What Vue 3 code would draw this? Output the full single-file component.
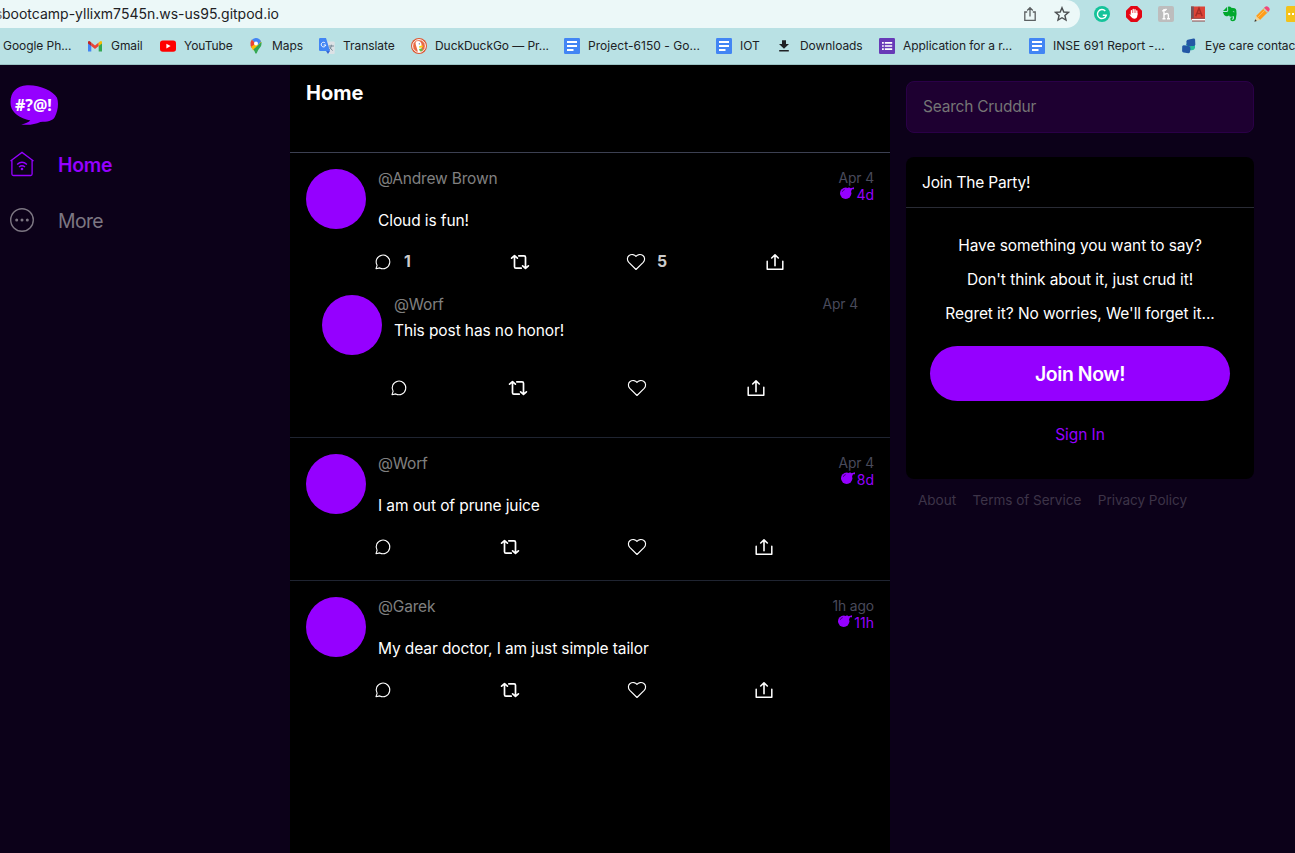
<script setup>
import { h } from 'vue'

const bookmarks = [
  { label: 'Google Ph...', icon: null },
  { label: 'Gmail', icon: 'gmail' },
  { label: 'YouTube', icon: 'youtube' },
  { label: 'Maps', icon: 'maps' },
  { label: 'Translate', icon: 'translate' },
  { label: 'DuckDuckGo — Pr...', icon: 'duck' },
  { label: 'Project-6150 - Go...', icon: 'docs' },
  { label: 'IOT', icon: 'docs' },
  { label: 'Downloads', icon: 'download' },
  { label: 'Application for a r...', icon: 'forms' },
  { label: 'INSE 691 Report -...', icon: 'docs' },
  { label: 'Eye care contac', icon: 'eye' },
]

const posts = [
  {
    handle: '@Andrew Brown', message: 'Cloud is fun!', date: 'Apr 4', expires: '4d', replies: 1, likes: 5,
    reply: { handle: '@Worf', message: 'This post has no honor!', date: 'Apr 4' },
  },
  { handle: '@Worf', message: 'I am out of prune juice', date: 'Apr 4', expires: '8d' },
  { handle: '@Garek', message: 'My dear doctor, I am just simple tailor', date: '1h ago', expires: '11h' },
]

const pitch = [
  'Have something you want to say?',
  "Don't think about it, just crud it!",
  "Regret it? No worries, We'll forget it...",
]

const stroke = (d, width) => h('path', { d, fill: 'none', stroke: 'currentColor', 'stroke-width': width, 'stroke-linejoin': 'round', 'stroke-linecap': 'round' })
const shapes = {
  comment: () => stroke('M3 16.7 L4.1 13.3 A6.8 6.8 0 1 1 6.8 15.9 Z', 1.1),
  repost: () => [
    stroke('M1.6 6.2 L4.5 3.6 L7.4 6.2 M4.5 4 V14.8 Q4.5 16.2 5.9 16.2 H11.2', 1.7),
    stroke('M8.8 3.8 H14.1 Q15.5 3.8 15.5 5.2 V15.8 M12.6 13.8 L15.5 16.4 L18.4 13.8', 1.7),
  ],
  heart: () => stroke('M10 17.5 L2.8 10.4 C0.8 8.2 1 5.1 3.1 3.5 C5.4 1.9 8.6 2.4 10 4.4 C11.4 2.4 14.6 1.9 16.9 3.5 C19 5.1 19.2 8.2 17.2 10.4 Z', 1.15),
  share: () => [
    stroke('M2.2 9.3 V17.2 H17.8 V9.3', 1.5),
    stroke('M10 13.8 V3.2 M6.7 6 L10 2.9 L13.3 6', 1.6),
  ],
}
const ActionIcon = (props) => h('svg', { viewBox: '0 0 20 20', width: 20, height: 20 }, shapes[props.name]())
ActionIcon.props = ['name']
</script>

<template>
  <div class="window">
    <div class="toolbar">
      <div class="address">
        <span class="url"><i>s</i>bootcamp-yllixm7545n.ws-us95.gitpod.io</span>
        <svg viewBox="0 0 16 16" width="16" height="16"><path d="M5.2 6H2.8v8.4h10.4V6h-2.4M8 10.5V1.8M5.2 4.5 8 1.7l2.8 2.8" fill="none" stroke="#5c6062" stroke-width="1.3" /></svg>
        <svg viewBox="0 0 16 16" width="16" height="16"><path d="m8 1.7 1.8 4.3 4.7.4-3.6 3.1 1.1 4.6L8 11.7l-4 2.4 1.1-4.6-3.6-3.1 4.7-.4z" fill="none" stroke="#4c5052" stroke-width="1.4" /></svg>
      </div>
      <div class="extensions">
        <svg viewBox="0 0 16 16" width="16" height="16"><circle cx="8" cy="8" r="8" fill="#15c39a" /><path d="M11.3 5A4.5 4.5 0 1 0 12.3 9.3H8.8M12.3 9.3 10.8 11.8" fill="none" stroke="#fff" stroke-width="1.4" /></svg>
        <svg viewBox="0 0 16 16" width="16" height="16"><path d="M4.8 0h6.4L16 4.8v6.4L11.2 16H4.8L0 11.2V4.8z" fill="#e30613" /><path d="M5.4 8V4.6M7.2 7.5V3.4M9 7.5V3.6M10.8 8.5V4.8" stroke="#fff" stroke-width="1.3" stroke-linecap="round" /><path d="M4.8 7h6.6v2.6Q11 12.8 8.3 12.8 6.5 12.8 5.200 11L3.300 8.600q.6-1 2 .3z" fill="#fff" /></svg>
        <svg viewBox="0 0 16 16" width="16" height="16"><rect width="16" height="16" rx="2" fill="#bdbdbd" /><path d="M6 3v10M6 8.8Q10.6 6 10.4 9.5V13M4.2 4.7q3 .6 4.3-1.8M4.5 12.700h3M9 12.700h3" fill="none" stroke="#fff" stroke-width="1.4" /></svg>
        <svg viewBox="0 0 16 16" width="16" height="16"><path d="M1 .5h14v14H2.500L1 13z" fill="#dc4437" /><path d="M1 .5h2.800v11.500H1z" fill="#77545b" /><path d="M2 12.500h13V15H2z" fill="#fff" /><path d="M2 15h13M1.500 12.300H15" stroke="#8b4545" /><path d="m5.700 10.300 3.300-8 3.200 8M7 7.600h4" fill="none" stroke="#a72c26" stroke-width="1.500" /></svg>
        <svg viewBox="0 0 16 16" width="16" height="16"><path d="M5.200.8 1 5h3.400q.8 0 .8-.8z" fill="#00a82d" /><path d="M6 .7q2.300-.4 3.400 1l3.300.5q1.300.3 1.600 2 .8 4.200-.4 8.400-.4 2.700-3.200 2.700-2.500 0-2.500-2.200 0-2.100 2.500-2v1.700q-1-.2-1 .4t1 .6q1.400 0 1.400-2.300l-.4-1.600Q7.600 12 7 9.200 6.300 10.800 4 10.200 1.600 9.500.9 6h3.900Q6.200 5.800 6.200 4.400z" fill="#00a82d" /><path d="M10.600 6q1.200-1.400 2 .2z" fill="#b9e1e4" /></svg>
        <svg viewBox="0 0 16 16" width="16" height="16"><path d="m2 10 8.800-8.800 4 4L6 14z" fill="#ff9d1b" /><path d="m10 2 1.600-1.600q1.400-.8 3 .9 1.600 1.600.9 3L14 5.800z" fill="#f1477e" /><path d="m9.100 2.900 4 4 1-1.100-3.900-3.900z" fill="#bdc9cb" /><path d="m2 10 4 4-5.300 1.600z" fill="#efd49b" /><path d="m1.200 13.300 1.600 1.600-2.400.8z" fill="#333" /><path d="M3.600 11.500 11.800 3.300" stroke="#ffc25b" /></svg>
        <svg viewBox="0 0 16 16" width="16" height="16"><rect width="16" height="16" rx="1.500" fill="#f3c21a" /><path d="M2.200 7h2v2h-2zM6 7h2v2H6zM10 7h2v2h-2z" fill="#fff" /></svg>
      </div>
    </div>

    <nav class="bookmarks">
      <a v-for="b in bookmarks" :key="b.label" class="bookmark">
        <svg v-if="b.icon === 'gmail'" viewBox="0 0 16 16" width="16" height="16"><path d="M1 4v9.500h3.300V7z" fill="#4285f4" /><path d="M15 4v9.500h-3.300V7z" fill="#34a853" /><path d="m4.300 4.600 3.700 3 3.700-3V8L8 11 4.300 8z" fill="#ea4335" /><path d="M1 4Q1.500 1.800 4.300 4.400V8L1 5.500z" fill="#c5221f" /><path d="M15 4q-.5-2.200-3.300.4V8L15 5.500z" fill="#fbbc04" /></svg>
        <svg v-else-if="b.icon === 'youtube'" viewBox="0 0 16 16" width="16" height="16"><rect y="2.400" width="16" height="11.400" rx="2.800" fill="#f00" /><path d="m6.400 5.800 4.200 2.300-4.200 2.300z" fill="#fff" /></svg>
        <svg v-else-if="b.icon === 'maps'" viewBox="0 0 16 16" width="16" height="16"><path d="M3.900 1.600 8 5.400 3.600 10Q1 5.300 3.900 1.600z" fill="#ea4335" /><path d="m3.100 8.800 9.300-6.500 1 2.500-8.300 7.600z" fill="#fbbc04" /><path d="M13.300 4q1 3.400-1.800 6.300Q9.600 12.300 8.800 15q-.8 1.300-1.600 0-.5-1.700-1.800-3.400z" fill="#34a853" /><path d="M8 0A5.400 5.400 0 0 1 13 3.500L10 7 4 1.700Q5.700 0 8 0" fill="#4285f4" /><circle cx="8" cy="5.500" r="2" fill="#fff" /></svg>
        <svg v-else-if="b.icon === 'translate'" viewBox="0 0 16 16" width="16" height="16"><path d="M7 3.500h7.700q1 0 1 1V15q0 1-1 1H9z" fill="#dce1e5" /><path d="M9.700 8h5.200M12.300 6.700V8q-.3 2.700-2.500 4.200M10.700 9q1 2 3 3.500" fill="none" stroke="#778995" stroke-width="1" /><path d="M1.200 0H7l4 13H1.200Q0 13 0 11.800V1.200Q0 0 1.200 0z" fill="#4285f4" /><path d="M7 13h4l-2 3z" fill="#3367d6" /><path d="M6.200 5A2.300 2.300 0 1 0 6.800 7H4.700" fill="none" stroke="#fff" stroke-width="1" /></svg>
        <svg v-else-if="b.icon === 'duck'" viewBox="0 0 16 16" width="16" height="16"><circle cx="8" cy="8" r="8" fill="#de5833" /><circle cx="8" cy="8" r="6.400" fill="#e96a44" stroke="#fff" stroke-width="1" /><path d="M5 3.400q3.900-1.500 5.300 1.800.5 1.600.3 4.600l-.2 4.200q-2 .7-3.400-.1L5.100 7.800Q4 4.500 5 3.400z" fill="#fff" /><circle cx="8.300" cy="5.800" r=".6" fill="#315388" /><path d="m8.200 8 3.800-.4-.3 1.500-3.300 1z" fill="#fdd20a" /><path d="m8 11 3.400-.8v2.700L9 13.400z" fill="#65bc46" /></svg>
        <svg v-else-if="b.icon === 'docs'" viewBox="0 0 16 16" width="16" height="16"><rect width="16" height="16" rx="1.200" fill="#4285f4" /><path d="M3 4h10M3 8h10M3 12h6.500" stroke="#fff" stroke-width="1.800" /></svg>
        <svg v-else-if="b.icon === 'download'" viewBox="0 0 16 16" width="16" height="16"><path d="M6 2.200h4V6h3L8 10.800 3 6h3zM3.200 12h9.600v1.500H3.200z" fill="#202124" /></svg>
        <svg v-else-if="b.icon === 'forms'" viewBox="0 0 16 16" width="16" height="16"><rect width="16" height="16" rx="1.200" fill="#673ab7" /><path d="M3 4.800h1.800M3 8h1.800M3 11.200h1.800M5.800 4.800h7.400M5.800 8h7.400M5.800 11.200h7.400" stroke="#fff" stroke-width="1.700" /></svg>
        <svg v-else-if="b.icon === 'eye'" viewBox="0 0 16 16" width="16" height="16"><path d="M5 6h9v4q-1 3-5 2z" fill="#25b99a" /><path d="m2.600 7.200 6.200.5q1.200.3 1.200 1.500l-1.100 5q-.4 1-1.400 1l-5-.7q-1.300-.2-1.400-1.500l.1-4.400q0-1.300 1.400-1.400z" fill="#2357a5" /><path d="m6.700 1.800 5.800-1.300q1.500-.2 1.600 1.300l.2 4.800q-.2 1.400-1.500 1.500H7.200Q5.600 8 5.400 6.600l.1-3.300q.1-1.200 1.200-1.500z" fill="#2357a5" /><path d="M5.300 6.600Q7 9 11.500 7.900L9.700 11Q9.500 7.800 5 7.200z" fill="#25b99a" /></svg>
        <span>{{ b.label }}</span>
      </a>
    </nav>

    <div class="app">
      <aside class="sidebar">
        <div class="logo">
          <svg viewBox="0 0 48 40" width="48" height="40"><path d="M17 .2C29-.5 43 5.500 47 12.700c2 5.700.8 13.800-2.200 19.300-2.300 4.200-7.600 4.800-14.400 4.900-5.400 2.200-11 3.500-19.200 2.500 4.300-.9 7.300-2.200 9.100-4C9.600 33.300 2.300 28 .8 20.700-.9 8.800 5.100 1 17 .2Z" fill="#9500ff" /></svg>
          <span>#?@!</span>
        </div>
        <a class="nav-item active">
          <svg viewBox="0 0 24 26" width="24" height="26"><path d="M.5 10 12 1.400 23.500 10M1.900 9v14q0 1.500 1.500 1.500h17.200q1.500 0 1.500-1.500V9" fill="none" stroke="currentColor" stroke-width="1.300" /><path d="M7.100 13.500q4.900-4.300 9.800 0M9 16q3-2.500 6 0" fill="none" stroke="currentColor" stroke-width="1.400" /><circle cx="12" cy="18" r="1.300" fill="currentColor" /></svg>
          <span>Home</span>
        </a>
        <a class="nav-item more">
          <svg viewBox="0 0 24 24" width="24" height="24"><circle cx="12" cy="12" r="11.300" fill="none" stroke="currentColor" stroke-width="1.400" /><g fill="currentColor"><circle cx="6.700" cy="12" r="1.500" /><circle cx="12" cy="12" r="1.500" /><circle cx="17.300" cy="12" r="1.500" /></g></svg>
          <span>More</span>
        </a>
      </aside>

      <main class="feed">
        <header class="feed-header">Home</header>
        <article v-for="post in posts" :key="post.handle" class="post" :class="{ threaded: post.reply }">
          <div class="entry">
            <div class="avatar"></div>
            <div class="body">
              <div class="handle">{{ post.handle }}</div>
              <p class="message">{{ post.message }}</p>
            </div>
            <div class="times">
              <div class="date">{{ post.date }}</div>
              <div class="expires">
                <svg viewBox="0 0 14 12" width="14" height="12"><circle cx="5.700" cy="6.300" r="5.700" fill="currentColor" /><path d="M7 1.500 9 .2 10.600 1.200 14 .3V2.200L12 2.300 10.800 5z" fill="currentColor" /><path d="M2.300 4.800Q2.900 2.900 4.700 2.600" fill="none" stroke="#2a0050" stroke-width=".8" /></svg>
                <span>{{ post.expires }}</span>
              </div>
            </div>
          </div>
          <div class="actions">
            <span class="action"><ActionIcon name="comment" /><b v-if="post.replies">{{ post.replies }}</b></span>
            <span class="action"><ActionIcon name="repost" /></span>
            <span class="action"><ActionIcon name="heart" /><b v-if="post.likes">{{ post.likes }}</b></span>
            <span class="action"><ActionIcon name="share" /></span>
          </div>
          <div v-if="post.reply" class="reply">
            <div class="entry">
              <div class="avatar"></div>
              <div class="body">
                <div class="handle">{{ post.reply.handle }}</div>
                <p class="message">{{ post.reply.message }}</p>
              </div>
              <div class="date">{{ post.reply.date }}</div>
            </div>
            <div class="actions">
              <span class="action"><ActionIcon name="comment" /></span>
              <span class="action"><ActionIcon name="repost" /></span>
              <span class="action"><ActionIcon name="heart" /></span>
              <span class="action"><ActionIcon name="share" /></span>
            </div>
          </div>
        </article>
      </main>

      <aside class="rail">
        <input class="search" type="text" placeholder="Search Cruddur" />
        <section class="card">
          <h2>Join The Party!</h2>
          <div class="card-body">
            <p v-for="line in pitch" :key="line">{{ line }}</p>
            <button>Join Now!</button>
            <a class="signin">Sign In</a>
          </div>
        </section>
        <footer class="links"><a>About</a><a>Terms of Service</a><a>Privacy Policy</a></footer>
      </aside>
    </div>
  </div>
</template>

<style>
body { margin: 0; overflow: hidden; }
</style>

<style scoped>
.window { height: 853px; display: flex; flex-direction: column; overflow: hidden; font-family: Inter, "Liberation Sans", sans-serif; }
svg { display: block; flex: none; }

.toolbar { height: 28px; flex: none; display: flex; background: #b9e1e4; }
.address { flex: none; width: 1080px; box-sizing: border-box; padding-right: 10px; display: flex; align-items: center; gap: 16px; background: #ecf8f8; border-radius: 0 14px 14px 0; color: #202124; }
.url { flex: 1; margin-left: -5px; padding-bottom: 1px; font-size: 14px; white-space: nowrap; }
.url i { display: inline-block; width: 7px; font-style: normal; color: #777; }
.extensions { flex: none; display: flex; align-items: center; gap: 16px; margin-left: 14px; }

.bookmarks { height: 37px; box-sizing: border-box; flex: none; display: grid; grid-template-columns: 84px 73px 88px 71px 92px 153px 152px 60px 103px 150px 152px 117px; padding-left: 3px; background: #b9e1e4; border-bottom: 1px solid #9bc3c5; }
.bookmark { display: flex; align-items: center; gap: 8px; font-size: 12px; letter-spacing: -.06px; color: #202124; white-space: nowrap; }
.bookmark:nth-child(7), .bookmark:nth-child(11) { letter-spacing: .05px; }
.bookmark span { padding-bottom: 1px; }

.app { flex: 1; min-height: 0; display: grid; grid-template-columns: 290px 600px 1fr; background: #0c0119; }

.sidebar { padding: 20px 0 0 10px; }
.logo { position: relative; width: 48px; height: 40px; margin-bottom: 25px; }
.logo span { position: absolute; left: 5px; top: 9px; font: bold 16px/22px "Noto Sans", sans-serif; letter-spacing: 0; color: #fff; }
.nav-item { display: flex; align-items: center; gap: 24px; height: 30px; margin-bottom: 26px; font-size: 19.4px; color: #7c7682; }
.nav-item svg { margin-bottom: 2px; }
.nav-item.active { color: #9500ff; font-weight: 600; letter-spacing: -.2px; }
.nav-item.more { letter-spacing: -.6px; }

.feed { background: #000; color: #fff; }
.feed-header { height: 88px; box-sizing: border-box; padding: 16px; border-bottom: 1px solid #3c4052; font-size: 20px; line-height: 24px; font-weight: 700; }
.post { height: 143px; box-sizing: border-box; padding: 16px 16px 0; border-bottom: 1px solid #1f2431; }
.post.threaded { height: 285px; }
.post:last-child { border-bottom: 0; }
.entry { display: flex; height: 83px; }
.avatar { flex: none; width: 60px; height: 60px; margin-right: 12px; border-radius: 50%; background: #9500ff; }
.body { flex: 1; font-size: 15.5px; line-height: 20px; letter-spacing: -.1px; }
.handle { color: #808080; letter-spacing: -.18px; }
.message { margin: 22px 0 0; }
.times { text-align: right; }
.date { font-size: 13.8px; line-height: 19px; letter-spacing: -.1px; color: #494a5b; }
.expires { display: flex; justify-content: flex-end; gap: 2px; margin-top: -2px; font-size: 14px; line-height: 17px; color: #9500ff; }
.expires svg { margin-top: 1px; }

.actions { display: grid; grid-template-columns: 127px 127px 127px 20px; height: 20px; margin-left: 67px; }
.threaded > .actions { grid-template-columns: 137px 116px 139px 20px; }
.action { display: flex; align-items: center; gap: 11px; }
.action b { font-size: 15.8px; line-height: 20px; color: #ccc; }

.reply { margin: 23px 16px 0; }
.reply .message { margin-top: 6px; }
.reply .actions { grid-template-columns: 119px 119px 119px 20px; }

.rail { padding: 16px 41px 0 16px; }
.search { display: block; width: 100%; height: 52px; box-sizing: border-box; padding: 0 16px 2px; border: 1px solid #2a0047; border-radius: 8px; background: #1e0031; color: #fff; font: 15.5px Inter, sans-serif; letter-spacing: -.22px; }
.search::placeholder { color: #757575; }
.card { height: 322px; margin-top: 24px; border-radius: 8px; background: #000; color: #fff; }
.card h2 { height: 51px; box-sizing: border-box; margin: 0; padding: 0 16px; border-bottom: 1px solid #292b35; font-size: 15.5px; line-height: 52px; font-weight: 400; letter-spacing: -.2px; }
.card-body { padding: 21px 24px 0; text-align: center; font-size: 15.5px; line-height: 34px; letter-spacing: -.08px; }
.card-body p { margin: 0; white-space: nowrap; }
.card-body button { display: block; width: 300px; height: 55px; margin: 15px 0 0; padding: 0; border: 0; border-radius: 28px; background: #9500ff; color: #fff; font: 600 19.4px Inter, sans-serif; letter-spacing: -.4px; }
.signin { display: block; margin-top: 17px; color: #9500ff; }
.links { display: flex; gap: 16.5px; padding: 12px; font-size: 13.6px; line-height: 18px; letter-spacing: -.05px; color: #3d3448; }
</style>
